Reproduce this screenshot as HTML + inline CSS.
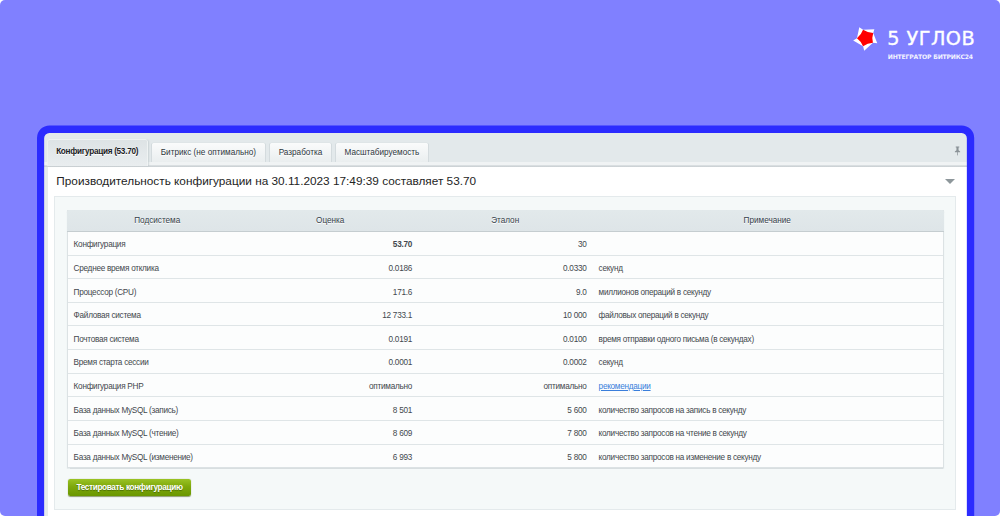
<!DOCTYPE html>
<html lang="ru">
<head>
<meta charset="utf-8">
<title>Производительность конфигурации</title>
<style>
html,body{margin:0;padding:0;}
body{width:1000px;height:517px;overflow:hidden;background:#fff;font-family:"Liberation Sans",Arial,sans-serif;position:relative;}
.abs{position:absolute;}
#card{position:absolute;left:0;top:0;width:1000px;height:516px;border-radius:5px;background:#8080ff;overflow:hidden;}
#logo{position:absolute;left:845px;top:20px;}
#fb{position:absolute;left:0;top:0;z-index:5;pointer-events:none;}
#brand{position:absolute;left:887.2px;top:26.3px;-webkit-text-stroke:0.35px #fff;font-family:"DejaVu Sans","Liberation Sans",sans-serif;font-size:19.3px;color:#fff;white-space:nowrap;line-height:26px;letter-spacing:0.45px;}
#sub{position:absolute;left:887.8px;top:53px;font-family:"DejaVu Sans","Liberation Sans",sans-serif;font-size:6.1px;font-weight:bold;color:#fff;white-space:nowrap;line-height:8px;opacity:.9;letter-spacing:-0.19px;}
#frame{position:absolute;left:44px;top:133px;width:923px;height:420px;border-radius:5px 5px 0 0;background:#fff;overflow:hidden;}
/* coordinates inside #frame: origin = (44,133) */
#tabbar{position:absolute;left:0;top:0;width:923px;height:32px;background:#e3e9eb;}
#tabline1{position:absolute;left:0;top:29.3px;width:923px;height:2.9px;background:#f0f3f4;}
#tabline2{position:absolute;left:0;top:32.2px;width:923px;height:1.9px;background:linear-gradient(#dfe4e6,#c6cdd0);}
#leftstrip{position:absolute;left:0;top:34.1px;width:3.5px;height:400px;background:#e6ebec;}
.tab{position:absolute;top:10.2px;height:19.1px;border-radius:1.5px 1.5px 0 0;background:linear-gradient(#fafbfb,#f1f4f5 55%,#eaeeef);box-shadow:-0.6px 0 0 rgba(190,200,204,.7),0.6px 0 0 rgba(190,200,204,.7),0 -0.5px 0 rgba(215,222,225,.7);font-size:8.2px;color:#2d363d;text-align:center;line-height:19px;white-space:nowrap;text-shadow:0 1px 0 #fff;}
.tab.act{top:7.2px;height:25.6px;line-height:23px;background:linear-gradient(#dde3e5,#e4e9eb 55%,#e9edef);font-weight:bold;color:#1a2024;letter-spacing:-0.28px;box-shadow:0 -0.8px 0 #f3f6f6,0.9px 0 0 #f3f6f6,-0.8px 0 0 #eef2f2,1.8px 0 1.5px rgba(170,182,187,.45);}
#title{position:absolute;left:12.3px;top:40px;font-size:11.8px;line-height:16px;color:#242424;white-space:nowrap;}
#arrow{position:absolute;left:901px;top:46.4px;width:0;height:0;border-left:5px solid transparent;border-right:5px solid transparent;border-top:5.2px solid #8e979b;}
#panel{position:absolute;left:10px;top:63px;width:902px;height:314px;background:#f5f9f9;border:1px solid #e4eaec;box-sizing:border-box;}
#tbl{position:absolute;left:23px;top:77px;width:876.5px;height:257.8px;background:#fcfdfd;border:0.8px solid #dce2e4;box-sizing:border-box;box-shadow:0 0.7px 1px rgba(150,160,165,.3);}
#thead{position:absolute;left:-0.8px;top:-0.8px;width:876.5px;height:21.8px;background:linear-gradient(#e2e9eb,#dee5e8);border-bottom:1px solid #c5cdd0;box-sizing:border-box;border-radius:1.5px 1.5px 0 0;}
.th{position:absolute;top:0px;height:21px;line-height:21px;font-size:8.2px;letter-spacing:-0.02px;color:#36414a;text-align:center;text-shadow:0 1px 0 #fff;white-space:nowrap;}
.row{position:absolute;left:0;width:100%;height:23.62px;border-bottom:0.8px solid #dfe5e7;box-sizing:border-box;font-size:8.2px;color:#43484d;letter-spacing:-0.27px;}
.row span{position:absolute;top:1.4px;line-height:23px;white-space:nowrap;}
.c1{left:5.6px;}
.c2{right:530.5px;text-align:right;}
.c3{right:356px;text-align:right;}
.c4{left:530.6px;}
.row a{color:#3a7edb;text-decoration:underline;}
#btn{position:absolute;left:24px;top:346px;width:123px;height:17px;border-radius:2.5px;background:linear-gradient(#9ac324,#7ea80c 45%,#6a9700);box-shadow:0 0.7px 1px rgba(60,80,0,.55);color:#fff;font-weight:bold;font-size:8.2px;line-height:18.8px;text-align:center;white-space:nowrap;letter-spacing:-0.33px;text-shadow:0 0.7px 0.7px rgba(50,80,0,.6);}
</style>
</head>
<body>
<div id="card">
<svg id="logo" width="50" height="40" viewBox="845 20 50 40">
  <polygon points="863.06,29.8 874.38,29.22 873.22,33 877.28,43.15 872.93,42.86 864.22,50.7 863.06,46.34 853.19,40.54 856.96,38.22 859.29,27.19" fill="#ffffff"/>
  <path d="M863.06,29.80 Q867.65,32.82 873.22,33.00 Q871.58,37.95 872.93,42.86 Q867.53,43.17 863.06,46.34 Q861.22,41.40 856.96,38.22 Q861.24,34.86 863.06,29.80Z" fill="#ff0000"/>
</svg>
<div id="brand">5 УГЛОВ</div>
<div id="sub">ИНТЕГРАТОР БИТРИКС24</div>

<svg id="fb" width="1000" height="517" viewBox="0 0 1000 517"><path fill-rule="evenodd" fill="#2b2bff" d="M37,530 V138.0 A12.6,12.6 0 0 1 49.6,125.4 H961.6 A12.6,12.6 0 0 1 974.2,138.0 V530 Z M44.15,530 V138.15 A5.2,5.2 0 0 1 49.35,132.95 H961.65 A5.2,5.2 0 0 1 966.85,138.15 V530 Z"/></svg>
<div id="frame">
  <div id="tabbar"></div>
  <div id="tabline1"></div>
  <div id="tabline2"></div>
  <div id="leftstrip"></div>
  <div class="tab act" style="left:3.6px;width:99.1px;">Конфигурация (53.70)</div>
  <div class="tab" style="left:107.6px;width:113.6px;">Битрикс (не оптимально)</div>
  <div class="tab" style="left:225.9px;width:61.2px;">Разработка</div>
  <div class="tab" style="left:291.6px;width:92.7px;">Масштабируемость</div>
  <svg class="abs" style="left:910.3px;top:12.9px" width="7" height="9.8" viewBox="0 0 8 11"><path d="M2 0.5h4v1h-0.8v3.2l1.8 1.6v0.8h-2.6v3l-0.4 0.9l-0.4-0.9v-3h-2.6v-0.8l1.8-1.6v-3.2h-0.8z" fill="#8a9297"/></svg>

  <div id="title">Производительность конфигурации на 30.11.2023 17:49:39 составляет 53.70</div>
  <div id="arrow"></div>
  <div id="panel"></div>
  <div id="tbl">
    <div id="thead">
      <div class="th" style="left:0;width:180px;">Подсистема</div>
      <div class="th" style="left:176px;width:174px;">Оценка</div>
      <div class="th" style="left:350px;width:176px;">Эталон</div>
      <div class="th" style="left:524px;width:352px;">Примечание</div>
    </div>
    <div class="row" style="top:21.00px"><span class="c1">Конфигурация</span><span class="c2"><b>53.70</b></span><span class="c3">30</span><span class="c4"></span></div>
    <div class="row" style="top:44.62px"><span class="c1">Среднее время отклика</span><span class="c2">0.0186</span><span class="c3">0.0330</span><span class="c4">секунд</span></div>
    <div class="row" style="top:68.24px"><span class="c1">Процессор (CPU)</span><span class="c2">171.6</span><span class="c3">9.0</span><span class="c4">миллионов операций в секунду</span></div>
    <div class="row" style="top:91.86px"><span class="c1">Файловая система</span><span class="c2">12 733.1</span><span class="c3">10 000</span><span class="c4">файловых операций в секунду</span></div>
    <div class="row" style="top:115.48px"><span class="c1">Почтовая система</span><span class="c2">0.0191</span><span class="c3">0.0100</span><span class="c4">время отправки одного письма (в секундах)</span></div>
    <div class="row" style="top:139.10px"><span class="c1">Время старта сессии</span><span class="c2">0.0001</span><span class="c3">0.0002</span><span class="c4">секунд</span></div>
    <div class="row" style="top:162.72px"><span class="c1">Конфигурация PHP</span><span class="c2">оптимально</span><span class="c3">оптимально</span><span class="c4"><a>рекомендации</a></span></div>
    <div class="row" style="top:186.34px"><span class="c1">База данных MySQL (запись)</span><span class="c2">8 501</span><span class="c3">5 600</span><span class="c4">количество запросов на запись в секунду</span></div>
    <div class="row" style="top:209.96px"><span class="c1">База данных MySQL (чтение)</span><span class="c2">8 609</span><span class="c3">7 800</span><span class="c4">количество запросов на чтение в секунду</span></div>
    <div class="row" style="top:233.58px;border-bottom:none"><span class="c1">База данных MySQL (изменение)</span><span class="c2">6 993</span><span class="c3">5 800</span><span class="c4">количество запросов на изменение в секунду</span></div>
  </div>
  <div id="btn">Тестировать конфигурацию</div>
</div>
</div>
</body>
</html>
